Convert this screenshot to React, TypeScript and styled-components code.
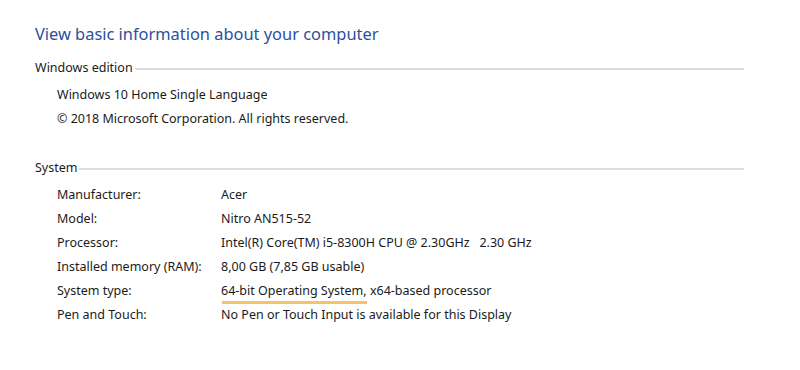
import { Fragment } from 'react';
import styled, { createGlobalStyle } from 'styled-components';

const GlobalStyle = createGlobalStyle`
  body {
    margin: 0;
    background: #ffffff;
    font-family: 'Noto Sans', 'Open Sans', Arial, sans-serif;
    color: #1b1b1b;
  }
`;

const Page = styled.div`
  width: 800px;
  height: 370px;
  box-sizing: border-box;
  padding: 22px 56px 0 35px;
`;

const Title = styled.h1`
  margin: 0 0 12px;
  font-size: 16.4px;
  font-weight: 400;
  line-height: 24px;
  color: #2b4f9c;
`;

const Section = styled.section<{ $gap?: number }>`
  margin-top: ${({ $gap }) => $gap ?? 0}px;
`;

const Legend = styled.div`
  display: flex;
  align-items: center;
  gap: 2px;
  font-size: 12.5px;
  line-height: 20px;

  &::after {
    content: '';
    flex: 1;
    height: 0;
    border-top: 2px solid #dedede;
    margin-top: 2px;
  }
`;

const Body = styled.div`
  padding: 5px 0 0 22px;
  font-size: 12.5px;
`;

const Line = styled.div`
  line-height: 24px;
`;

const Grid = styled.div`
  display: grid;
  grid-template-columns: 164px 1fr;
  line-height: 24px;
`;

const Highlight = styled.span`
  position: relative;

  &::after {
    content: '';
    position: absolute;
    left: 1px;
    right: 0;
    bottom: -5px;
    height: 3px;
    background: #f4c36e;
  }
`;

const rows: [string, React.ReactNode][] = [
  ['Manufacturer:', 'Acer'],
  ['Model:', 'Nitro AN515-52'],
  ['Processor:', 'Intel(R) Core(TM) i5-8300H CPU @ 2.30GHz\u00a0\u00a0\u00a02.30 GHz'],
  ['Installed memory (RAM):', '8,00 GB (7,85 GB usable)'],
  [
    'System type:',
    <>
      <Highlight>64-bit Operating System,</Highlight> x64-based processor
    </>,
  ],
  ['Pen and Touch:', 'No Pen or Touch Input is available for this Display'],
];

function App() {
  return (
    <>
      <GlobalStyle />
      <Page>
        <Title>View basic information about your computer</Title>
        <Section>
          <Legend>Windows edition</Legend>
          <Body>
            <Line>Windows 10 Home Single Language</Line>
            <Line>© 2018 Microsoft Corporation. All rights reserved.</Line>
          </Body>
        </Section>
        <Section $gap={27}>
          <Legend>System</Legend>
          <Body>
            <Grid>
              {rows.map(([label, value]) => (
                <Fragment key={label}>
                  <div>{label}</div>
                  <div>{value}</div>
                </Fragment>
              ))}
            </Grid>
          </Body>
        </Section>
      </Page>
    </>
  );
}

export default App;
